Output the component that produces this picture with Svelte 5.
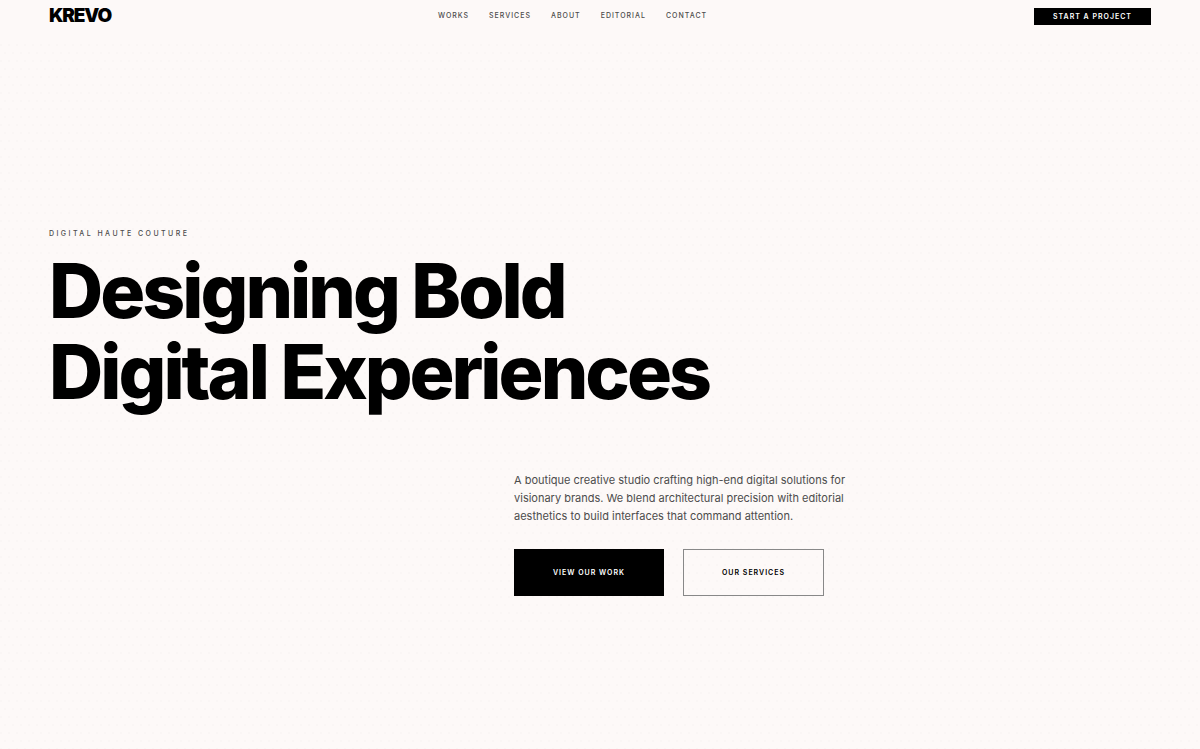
<script lang="ts">
  const links = ["Works", "Services", "About", "Editorial", "Contact"];
</script>

<div class="page">
  <header class="navbar">
    <a class="logo" href="#top">KREVO</a>
    <nav>
      {#each links as link}
        <a href="#{link.toLowerCase()}">{link}</a>
      {/each}
    </nav>
    <button class="btn btn-nav">Start a Project</button>
  </header>

  <main class="hero" id="top">
    <p class="eyebrow">Digital Haute Couture</p>
    <h1>Designing Bold<br />Digital Experiences</h1>
    <div class="intro">
      <p>
        A boutique creative studio crafting high-end digital solutions for
        visionary brands. We blend architectural precision with editorial
        aesthetics to build interfaces that command attention.
      </p>
      <div class="actions">
        <button class="btn btn-primary">View Our Work</button>
        <button class="btn btn-outline">Our Services</button>
      </div>
    </div>
  </main>
</div>

<style>
  :global(body) {
    margin: 0;
    background: #fdf9f8;
  }

  .page {
    display: flex;
    flex-direction: column;
    min-height: 100vh;
    font-family: Inter, sans-serif;
    color: #000;
  }

  .navbar {
    display: flex;
    justify-content: space-between;
    align-items: center;
    padding: 6px 49px 16px;
  }

  .logo {
    font-size: 19px;
    line-height: 20px;
    font-weight: 900;
    letter-spacing: -0.06em;
    color: #000;
    text-decoration: none;
  }

  nav {
    display: flex;
    gap: 20px;
  }

  nav a {
    font-size: 7px;
    line-height: 12px;
    font-weight: 500;
    letter-spacing: 1px;
    text-transform: uppercase;
    text-decoration: none;
    color: #4c4c4c;
  }

  .btn {
    border: 1px solid #000;
    border-radius: 0;
    font-family: inherit;
    font-size: 7px;
    line-height: 11px;
    font-weight: 600;
    letter-spacing: 1px;
    text-transform: uppercase;
    cursor: pointer;
  }

  .btn-nav {
    padding: 2px 18px;
    background: #000;
    color: #fff;
  }

  .hero {
    flex: 1;
    display: flex;
    flex-direction: column;
    justify-content: center;
    padding: 81px 49px 48px;
    /* two staggered layers of faint dots */
    background-image:
      radial-gradient(circle at 1px 3px, #faf6f5 1px, transparent 1px),
      radial-gradient(circle at 5px 11px, #faf6f5 1px, transparent 1px);
    background-size: 8px 16px;
  }

  .eyebrow {
    margin: 0 0 10px;
    font-size: 7px;
    line-height: 12px;
    font-weight: 500;
    letter-spacing: 0.35em;
    text-transform: uppercase;
    color: #4c4c4c;
  }

  h1 {
    margin: 0 0 59px;
    font-size: 75px;
    line-height: 81px;
    font-weight: 800;
    letter-spacing: -0.04em;
  }

  .intro {
    margin-left: 42.2%;
    max-width: 340px;
  }

  .intro p {
    margin: 0 0 24px;
    font-size: 11px;
    line-height: 18px;
    color: #4c4c4c;
  }

  .actions {
    display: flex;
    gap: 19px;
  }

  .btn-primary,
  .btn-outline {
    padding: 17px 38px;
    white-space: nowrap;
  }

  .btn-primary {
    background: #000;
    color: #fff;
  }

  .btn-outline {
    background: transparent;
    border-color: #888;
    color: #000;
  }
</style>
